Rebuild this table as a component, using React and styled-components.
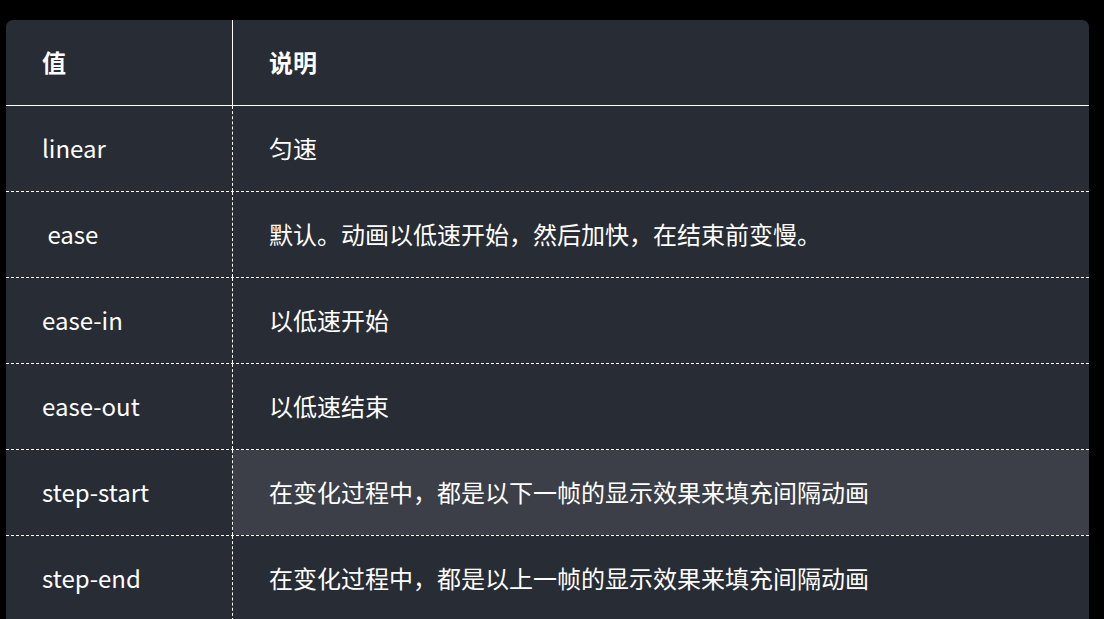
import React from 'react';
import styled, { createGlobalStyle } from 'styled-components';

const GlobalStyle = createGlobalStyle`
  html, body {
    margin: 0;
    padding: 0;
    background: #000;
    overflow: hidden;
  }
  body {
    font-family: "Noto Sans CJK SC", "Noto Sans", sans-serif;
  }
`

const Page = styled.div`
  padding: 20px 15px 0 6px;
`

const Table = styled.div`
  width: 1083px;
  background: #282c34;
  border-radius: 7px 7px 0 0;
  overflow: hidden;
  color: #fff;
  font-size: 24px;
`

const Row = styled.div`
  display: grid;
  grid-template-columns: 227px 1fr;
  height: 86px;
  box-sizing: border-box;
  border-bottom: 1px ${p => (p.$head ? 'solid' : 'dashed')} #fff;
`

const Cell = styled.div`
  display: flex;
  align-items: center;
  padding: 0 36px 2px 36px;
  font-weight: ${p => (p.$head ? 700 : 400)};
  background: ${p => (p.$active ? '#3c3f47' : 'transparent')};
  white-space: pre;
`

const KeyCell = styled(Cell)`
  border-right: 1px ${p => (p.$head ? 'solid' : 'dashed')} #fff;
`

const DescCell = styled(Cell)``

const rows = [
  ['linear', '匀速'],
  [' ease', '默认。动画以低速开始，然后加快，在结束前变慢。'],
  ['ease-in', '以低速开始'],
  ['ease-out', '以低速结束'],
  ['step-start', '在变化过程中，都是以下一帧的显示效果来填充间隔动画', true],
  ['step-end', '在变化过程中，都是以上一帧的显示效果来填充间隔动画'],
];

const App = () => {
  return (
    <>
      <GlobalStyle />
      <Page>
        <Table>
          <Row $head>
            <KeyCell $head>值</KeyCell>
            <DescCell $head>说明</DescCell>
          </Row>
          {rows.map(([key, desc, active]) => (
            <Row key={key}>
              <KeyCell>{key}</KeyCell>
              <DescCell $active={active}>{desc}</DescCell>
            </Row>
          ))}
        </Table>
      </Page>
    </>
  );
}

export default App;
